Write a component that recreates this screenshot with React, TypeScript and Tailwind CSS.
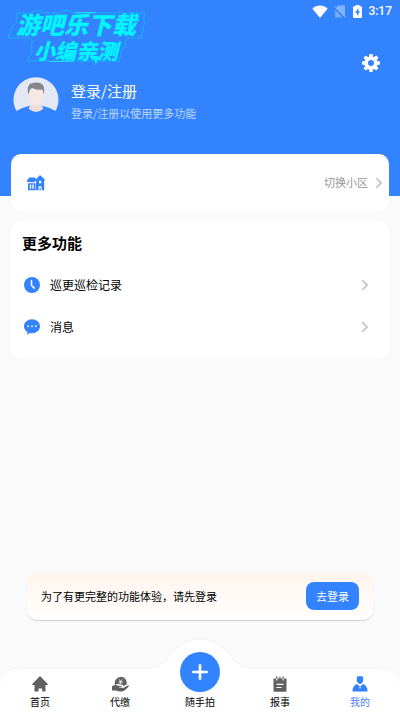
import type { ReactNode } from "react";

type RowProps = {
  icon: ReactNode;
  label: string;
};

type TabProps = {
  icon: ReactNode;
  label: string;
  active?: boolean;
};

function Chevron() {
  return (
    <svg viewBox="0 0 8 12" className="h-3 w-2 shrink-0" fill="none" stroke="#c8c8c8" strokeWidth="1.8">
      <path d="M1.2 1.2 6.2 6l-5 4.8" />
    </svg>
  );
}

function Watermark() {
  return (
    <div className="pointer-events-none absolute left-0 top-0 h-[70px] w-[150px] font-['Liberation_Sans','Noto_Sans_CJK_SC',sans-serif] font-black italic text-[#00f6ff]">
      <svg viewBox="0 0 150 70" className="absolute inset-0 h-full w-full" fill="none" stroke="#16b5fb" strokeWidth="1">
        <path d="M17 13h14l3-2h7l3 2h16l3-2.500h7l3 2.500h72l-2 7 2 1-4 17h-13l-3 3 1 5-4 3-3 12h-21l-3 4-3-4H27l5-9-1-6 2-5-4-3H8l5-13 3-1z" />
        <path d="M75 12.500h21M49 61.500h24" stroke="#27dcff" />
        <path d="m92 56 4 8 3-8z" fill="#00f6ff" stroke="none" />
      </svg>
      <p className="relative pl-4 pt-3 text-2xl leading-7">游吧乐下载</p>
      <p className="relative pl-[34px] text-[21px] leading-6">小编亲测</p>
    </div>
  );
}

function StatusBar() {
  return (
    <div className="flex h-[22px] items-center justify-end pr-2 text-white">
      <svg viewBox="0 0 16 13" className="mr-[6px] h-[13px] w-4" fill="currentColor">
        <path d="M.3 3.500C4.500-.4 11.500-.4 15.700 3.500L8 13z" />
      </svg>
      <svg viewBox="0 0 12 13" className="mr-[7px] h-[13px] w-3">
        <path d="M4 .5h7v11.500L2 3z" fill="#82b3ff" />
        <path d="M1 4.500 8.500 12.500H1z" fill="#75aaff" />
        <path d="m.5 1 11 11.500" stroke="#8fbaff" />
      </svg>
      <svg viewBox="0 0 9 13" className="mr-[6px] h-[13px] w-[9px]">
        <path d="M2.500 0h4v1.300H8q1 0 1 1V12q0 1-1 1H1q-1 0-1-1V2.300q0-1 1-1h1.500z" fill="currentColor" />
        <path d="M5.500 3 2 7.700h2v3.300l3-4.700H5.300z" fill="#3383ff" />
      </svg>
      <span className="font-[Roboto,sans-serif] text-xs font-medium">3:17</span>
    </div>
  );
}

function GearIcon() {
  return (
    <svg viewBox="-10 -10 20 20" className="h-5 w-5">
      <g fill="#fff">
        <circle r="6.600" />
        {[0, 45, 90, 135, 180, 225, 270, 315].map((angle) => (
          <path key={angle} d="m-2.300-5 .8-4h3l.8 4z" transform={`rotate(${angle})`} />
        ))}
      </g>
      <circle r="3" fill="#3383ff" />
    </svg>
  );
}

function Avatar() {
  return (
    <svg viewBox="0 0 46 46" className="h-[46px] w-[46px] shrink-0">
      <path d="M3.500 34A22.500 22.500 0 1 1 42.500 34Q37 30.500 30 29H16Q9 30.500 3.500 34z" fill="#e4e7f5" />
      <path d="M18 23h10v6q3 1 2 3-7 6-14 0-1-2 2-3z" fill="#e9dedb" />
      <path d="M16 12h14v9c0 4-3.500 7.500-7 7.500s-7-3.500-7-7.500z" fill="#f4e9e5" />
      <path d="M15.300 17.500C13.500 9 16 5.500 23.500 5.500c6.500 0 9 4 7.200 12l-1.200-5q-7 1-10-1.500-3 1-3 3.500z" fill="#858789" />
    </svg>
  );
}

function HouseIcon() {
  return (
    <svg viewBox="0 0 18 16" className="h-4 w-[18px]">
      <g fill="#3383ff">
        <path d="M2.200 2.500H8L9 4.300 7.800 7H0V5.800zM1 8.200h7.500V15.300H1zM13 0l5 4.800-.8 1V15.300H9V5.800L8.300 5z" />
      </g>
      <path d="M2.800 9.600h1.400v4.200H2.800zm2.500 0h1.400v4.200H5.300zM12 5.800h2.200v2.500H12zM11.500 15.300v-3.400q1.600-1.800 3.200 0v3.400h-1v-2.500h-1.200v2.500z" fill="#fff" />
    </svg>
  );
}

function ClockIcon() {
  return (
    <svg viewBox="0 0 16 16" className="h-4 w-4">
      <circle cx="8" cy="8" r="8" fill="#3383ff" />
      <path d="M7.500 3.500v5l2.800 2.600" fill="none" stroke="#fff" strokeWidth="1.500" strokeLinecap="round" />
    </svg>
  );
}

function ChatIcon() {
  return (
    <svg viewBox="0 0 16 16" className="h-4 w-4">
      <path d="M8 .3c4.400 0 8 3 8 6.900s-3.600 7-8 7q-1.200 0-2.300-.3Q4.500 15 3 15.700q.6-1.500.4-2.700C1.300 11.700 0 9.600 0 7.200 0 3.300 3.600.3 8 .3z" fill="#3383ff" />
      <path d="M3.300 6.500h1.600v1.600H3.300zm3.900 0h1.600v1.600H7.200zm3.900 0h1.600v1.600h-1.600z" fill="#fff" />
    </svg>
  );
}

function HomeTabIcon() {
  return (
    <svg viewBox="0 0 16 16" className="h-4 w-4" fill="currentColor">
      <path d="M8 0 16 8.200l-.5.800H.5L0 8.200zM2.500 8.500h11v7h-3.300v-3H6.500v3h-4z" />
    </svg>
  );
}

function PayTabIcon() {
  return (
    <svg viewBox="0 0 17 16" className="h-4 w-[17px]" fill="currentColor">
      <path d="M3.200 9.200a6 6 0 1 1 11.300-.7l-2.700 1.600q-.5-1.400-2.300-1.400-2-.2-3-.8-2-.2-3.300 1.300z" />
      <path d="M0 10.300q3-2 5.500-.9 1.800.9 4 .8.900.6 0 1.300H7v.6h4.200l4.500-2.700q1.300-.2 1.100.8-4 5-7 5.300-3.500.2-6-1H0z" />
      <path d="m7 3.300 1.600 2 1.600-2M6.700 5.500h3.900M6.700 7h3.900M8.600 5.300v3" fill="none" stroke="#fff" strokeWidth=".7" />
    </svg>
  );
}

function ReportTabIcon() {
  return (
    <svg viewBox="0 0 14 16" className="h-4 w-[14px]">
      <path d="M.5 2.500h2.700V.3h1.200v2.200h1.900V.7h1.200v1.800h2V.3h1.200v2.200h2.800V15q0 .7-.7.700H1.200q-.7 0-.7-.7z" fill="currentColor" />
      <path d="M3.700 2.500v2M10.100 2.500v2M3.500 8.300h7M3.500 11.500h5" stroke="#fff" strokeWidth="1.200" />
    </svg>
  );
}

function MineTabIcon() {
  return (
    <svg viewBox="0 0 16 16" className="h-4 w-4" fill="currentColor">
      <path d="M5.500.3h4.200q1.500 0 1.500 1.500v2.300c0 2-1.200 3.800-3.200 3.800S4.600 6 4.600 4.100q0-3 .9-3.800zM5 8l3 2.700L11 8q4.500 1.500 4.500 7.500H.5Q.5 9.500 5 8z" />
      <path d="m7.200 10.500.8.700.8-.7-.4 1.800-.4.700-.4-.7z" fill="#fff" />
    </svg>
  );
}

function MenuRow({ icon, label }: RowProps) {
  return (
    <li>
      <button className="flex h-[42px] w-full items-center pl-[2px] pr-[9px] text-black">
        {icon}
        <span className="ml-[10px] flex-1 text-left text-xs">{label}</span>
        <Chevron />
      </button>
    </li>
  );
}

function Tab({ icon, label, active }: TabProps) {
  return (
    <button className="flex flex-1 flex-col items-center pt-[7px]">
      <span className={active ? "text-[#3383ff]" : "text-[#606060]"}>{icon}</span>
      <span className={`mt-[2px] text-[10px] leading-4 ${active ? "text-[#4c7dff]" : "text-black"}`}>
        {label}
      </span>
    </button>
  );
}

function App() {
  return (
    <div className="flex min-h-screen flex-col bg-[#fafafa] font-['Noto_Sans_CJK_SC',sans-serif]">
      <header className="relative bg-[#3383ff] pb-[73px]">
        <StatusBar />
        <Watermark />
        <div className="flex justify-end pr-[19px] pt-[31px]">
          <button aria-label="设置">
            <GearIcon />
          </button>
        </div>
        <button className="flex items-center pl-[13px] pt-1 text-left">
          <Avatar />
          <span className="ml-3 flex flex-col pt-[2px]">
            <span className="text-[15px] leading-6 text-white">登录/注册</span>
            <span className="text-[11px] leading-5 text-[#bed7ff]">登录/注册以使用更多功能</span>
          </span>
        </button>
      </header>

      <main className="relative -mt-[42px] flex flex-1 flex-col">
        <section className="mx-[11px] flex h-[57px] items-center rounded-[10px] bg-white pl-4 pr-[6px]">
          <HouseIcon />
          <button className="ml-auto flex items-center gap-[7px] text-[11px] text-[#999]">
            切换小区
            <Chevron />
          </button>
        </section>

        <section className="mx-[11px] mt-[10px] rounded-[10px] bg-white px-[11px] pb-[11px] pt-[10px]">
          <h2 className="text-[15px] font-bold leading-6 text-black">更多功能</h2>
          <ul className="mt-[9px]">
            <MenuRow icon={<ClockIcon />} label="巡更巡检记录" />
            <MenuRow icon={<ChatIcon />} label="消息" />
          </ul>
        </section>

        <section className="mx-[27px] mb-[49px] mt-auto flex h-12 items-center justify-between rounded-[10px] bg-gradient-to-b from-[#fff4ec] to-white px-[14px] shadow-[0_1px_1px_#cfcfcf]">
          <p className="text-[11px] text-black">为了有更完整的功能体验，请先登录</p>
          <button className="h-7 rounded-lg bg-[#3383ff] px-[10px] text-[11px] text-white">去登录</button>
        </section>
      </main>

      <nav className="relative flex h-[43px] rounded-t-[18px] bg-white shadow-[0_-1px_1px_#f3f3f3]">
        <svg viewBox="0 0 120 34" className="absolute -top-[31px] left-1/2 h-[34px] w-[120px] -translate-x-1/2">
          <path d="M0 31C21 31 24 24 33 14 40 6 48 1 60 1S80 6 87 14C96 24 99 31 120 31V34H0z" fill="#fff" />
          <path d="M0 30.500C21 30.500 24 24 33 14 40 6 48 1 60 1S80 6 87 14C96 24 99 30.500 120 30.500" fill="none" stroke="#f3f3f3" />
        </svg>
        <Tab icon={<HomeTabIcon />} label="首页" />
        <Tab icon={<PayTabIcon />} label="代缴" />
        <button className="relative -mt-[17px] flex flex-1 flex-col items-center">
          <span className="flex h-10 w-10 items-center justify-center rounded-full bg-[#3383ff]">
            <svg viewBox="0 0 16 16" className="h-4 w-4" stroke="#fff" strokeWidth="2.600" strokeLinecap="round">
              <path d="M8 1.300v13.400M1.300 8h13.400" />
            </svg>
          </span>
          <span className="mt-[2px] text-[10px] leading-4 text-black">随手拍</span>
        </button>
        <Tab icon={<ReportTabIcon />} label="报事" />
        <Tab icon={<MineTabIcon />} label="我的" active />
      </nav>
    </div>
  );
}

export default App;
